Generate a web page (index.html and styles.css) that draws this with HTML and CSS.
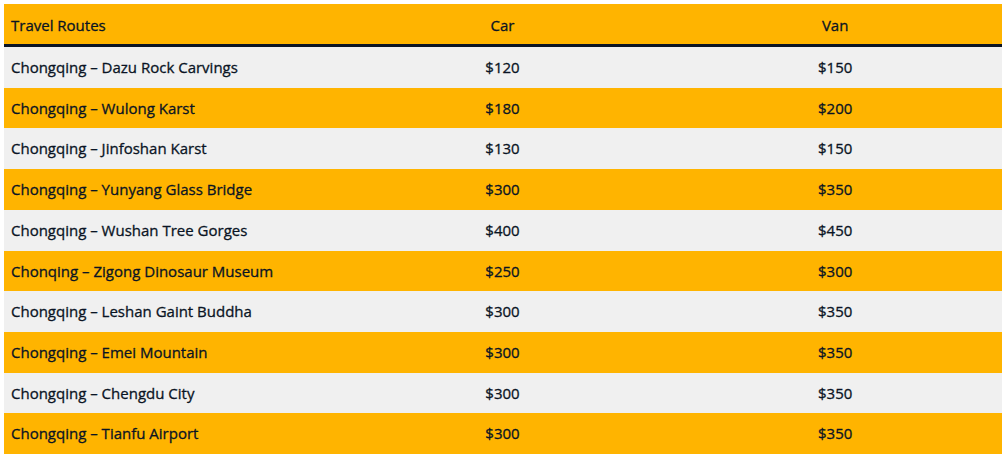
FILE: index.html
```html
<!DOCTYPE html>
<html>
<head>
<meta charset="utf-8">
<link rel="stylesheet" href="styles.css">
</head>
<body>
<table class="routes">
  <thead>
    <tr><th>Travel Routes</th><th>Car</th><th>Van</th></tr>
  </thead>
  <tbody>
    <tr><td>Chongqing – Dazu Rock Carvings</td><td>$120</td><td>$150</td></tr>
    <tr><td>Chongqing – Wulong Karst</td><td>$180</td><td>$200</td></tr>
    <tr><td>Chongqing – Jinfoshan Karst</td><td>$130</td><td>$150</td></tr>
    <tr><td>Chongqing – Yunyang Glass Bridge</td><td>$300</td><td>$350</td></tr>
    <tr><td>Chongqing – Wushan Tree Gorges</td><td>$400</td><td>$450</td></tr>
    <tr><td>Chonqing – Zigong Dinosaur Museum</td><td>$250</td><td>$300</td></tr>
    <tr><td>Chongqing – Leshan Gaint Buddha</td><td>$300</td><td>$350</td></tr>
    <tr><td>Chongqing – Emei Mountain</td><td>$300</td><td>$350</td></tr>
    <tr><td>Chongqing – Chengdu City</td><td>$300</td><td>$350</td></tr>
    <tr><td>Chongqing – Tianfu Airport</td><td>$300</td><td>$350</td></tr>
  </tbody>
</table>
</body>
</html>
```
FILE: styles.css
```css
html, body {
  margin: 0;
  background: #ffffff;
}
body {
  padding: 4px 6px 0 4px;
  font-family: "Open Sans", "Noto Sans", sans-serif;
  font-size: 15px;
  color: #0a1424;
}
.routes {
  width: 998px;
  border-collapse: collapse;
  table-layout: fixed;
}
.routes th,
.routes td {
  padding: 11px 8px 10px 7px;
  line-height: 19.7px;
  font-weight: 400;
  text-align: center;
  -webkit-text-stroke: 0.3px currentColor;
}
.routes th:first-child,
.routes td:first-child {
  text-align: left;
}
.routes thead tr {
  background: #ffb400;
}
.routes thead th {
  padding-top: 11.5px;
  padding-bottom: 8.8px;
  border-bottom: 3px solid #0b1526;
}
.routes tbody tr:nth-child(odd) {
  background: #f0f0f0;
}
.routes tbody tr:nth-child(even) {
  background: #ffb400;
}
```
